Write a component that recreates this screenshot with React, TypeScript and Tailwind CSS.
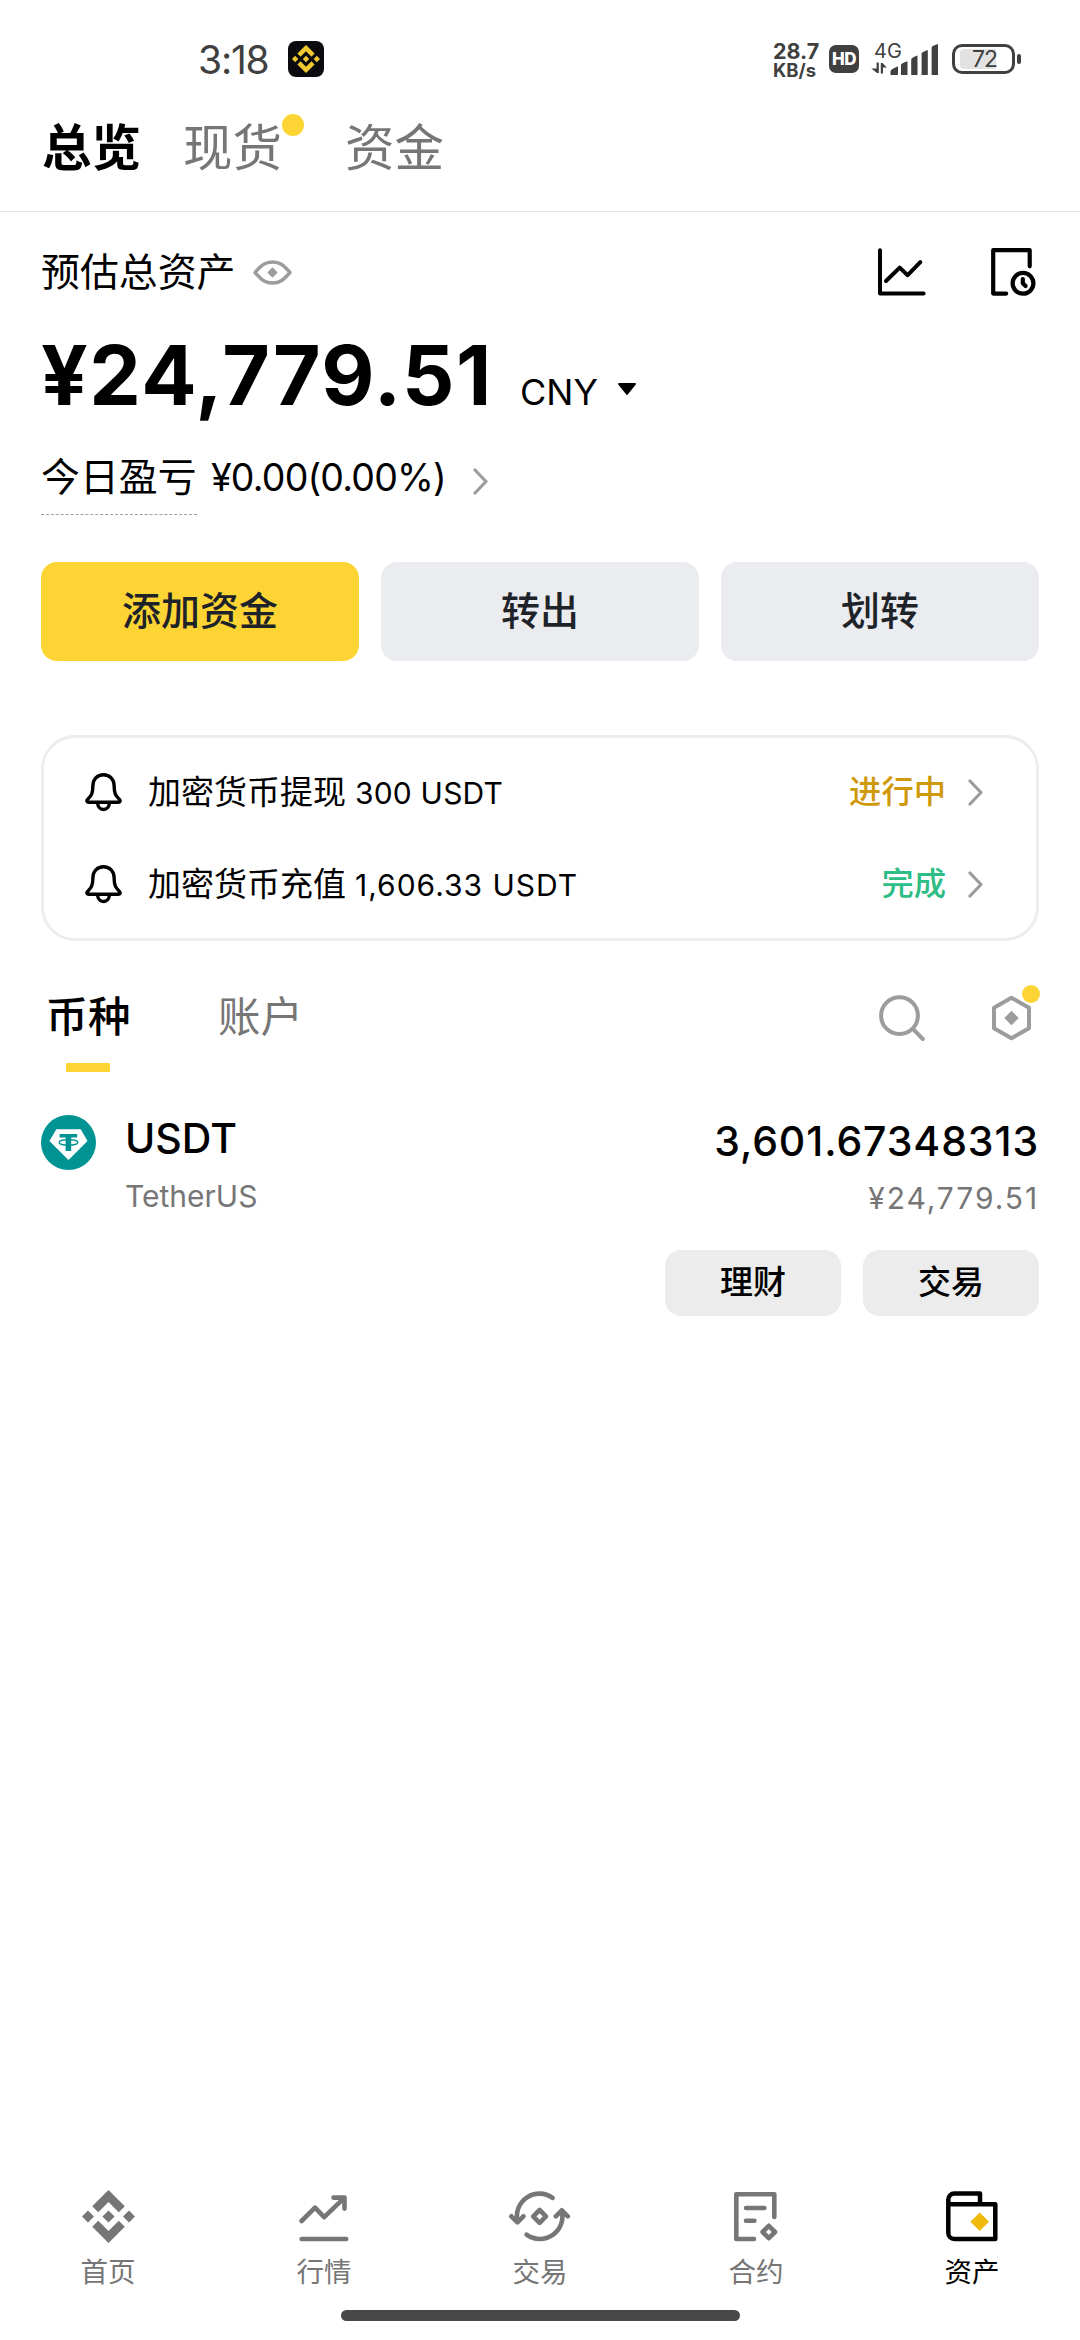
import React from 'react';

interface IconProps {
  className?: string;
}

interface Notice {
  label: string;
  amount: string;
  amountClass: string;
  status: string;
  statusClass: string;
}

interface NavItem {
  label: string;
  icon: React.ReactNode;
  active?: boolean;
}

const BinanceIcon: React.FC<IconProps> = ({ className }) => (
  <svg className={className} viewBox="0 0 126.61 126.61" fill="currentColor">
    <path d="M38.73 53.2l24.59-24.58 24.6 24.6 14.3-14.31L63.32 0 24.42 38.9z" />
    <path d="M0 63.31L14.3 49l14.31 14.31-14.31 14.3z" />
    <path d="M38.73 73.41L63.32 98l24.6-24.6 14.31 14.29-38.91 38.91-38.91-38.88z" />
    <path d="M98 63.31L112.3 49l14.31 14.3-14.31 14.32z" />
    <path d="M77.83 63.3L63.32 48.78 48.8 63.3l14.52 14.52z" />
  </svg>
);

const MarketIcon = () => (
  <svg width="50" height="53" viewBox="0 0 50 53" fill="none" stroke="currentColor" strokeWidth="4.6" strokeLinecap="round" strokeLinejoin="round">
    <path d="M2.6 31L16 17.6l9.2 9.6L45 8.2" />
    <path d="M34.5 7.6h11v11" />
    <path d="M2.6 49h44.6" />
  </svg>
);

const TradeIcon = () => (
  <svg width="61.4" height="53" viewBox="0 0 61.4 53" fill="none" stroke="currentColor" strokeWidth="4.6" strokeLinecap="round" strokeLinejoin="round">
    <path d="M43.6 7.8A22.6 22.6 0 0 0 8.4 31" />
    <path d="M2.4 26.3l6 6 6-6" />
    <path d="M17.6 44.7A22.6 22.6 0 0 0 52.8 21" />
    <path d="M46.8 26.3l6-6 6 6" />
    <path d="M30.6 20l6.4 6.4-6.4 6.4-6.4-6.4z" />
  </svg>
);

const FuturesIcon = () => (
  <svg width="44" height="53" viewBox="0 0 44 53" fill="none" stroke="currentColor" strokeWidth="4.6" strokeLinecap="round" strokeLinejoin="round">
    <path d="M40.3 27V4.3H2.3V49H20" />
    <path d="M12 18h18.4M12 30.8h8.4" />
    <path d="M34.8 35.8l6.2 6.2-6.2 6.2-6.2-6.2z" />
  </svg>
);

const WalletIcon = () => (
  <svg width="52" height="53" viewBox="0 0 52 53" fill="none" stroke="currentColor" strokeWidth="4.5" strokeLinejoin="round">
    <path d="M34 14.3V3.5H8.3a6 6 0 0 0-6 6V43a6 6 0 0 0 6 6h41V14.3H2.3" />
    <path d="M33.7 22.4l9.3 9.3-9.3 9.3-9.3-9.3z" fill="#f0b90b" stroke="none" />
  </svg>
);

const EyeIcon = () => (
  <svg width="39" height="25" viewBox="0 0 39 25" fill="none" stroke="#9c9c9c" strokeWidth="3.4" strokeLinejoin="round">
    <path d="M2 12.5C9 4.6 12.4 2 19.5 2S30 4.6 37 12.5C30 20.4 26.6 23 19.5 23S9 20.4 2 12.500z" />
    <path d="M19.5 7.3l5.2 5.2-5.2 5.2-5.2-5.200z" fill="#9c9c9c" stroke="none" />
  </svg>
);

const ChartIcon = () => (
  <svg width="48" height="48" viewBox="0 0 48 48" fill="none" stroke="currentColor" strokeWidth="4" strokeLinecap="round" strokeLinejoin="round">
    <path d="M2 2.2V45.6H45.6" />
    <path d="M8 33l13.7-13.4 8 7.6L42.3 14.2" />
  </svg>
);

const HistoryIcon = () => (
  <svg width="45" height="48" viewBox="0 0 45 48" fill="none" stroke="currentColor" strokeWidth="4.2" strokeLinecap="round" strokeLinejoin="round">
    <path d="M38.7 18.3V2.2H2.2V45.6H15.2" />
    <circle cx="32" cy="35.3" r="10.4" />
    <path d="M31.8 31v4.3l2.8 2.8" />
  </svg>
);

const BellIcon = () => (
  <svg width="37" height="39" viewBox="0 0 37 39" fill="none" stroke="currentColor" strokeWidth="3.4" strokeLinejoin="round">
    <path d="M18.5 1.7c-6.3 0-10.6 4.7-10.6 10.9 0 8.4-1.7 10-5.3 13.8-1.3 1.4-.7 2.8 1.1 2.8h29.6c1.8 0 2.4-1.4 1.1-2.8-3.6-3.8-5.3-5.4-5.3-13.8 0-6.2-4.3-10.9-10.6-10.9z" />
    <path d="M12.6 29.5c0 4 2.4 7 5.9 7s5.9-3 5.9-7" />
  </svg>
);

const ChevronIcon = () => (
  <svg width="15" height="27" viewBox="0 0 15 27" fill="none" stroke="#9c9c9c" strokeWidth="3.2" strokeLinecap="round" strokeLinejoin="round">
    <path d="M2 2l11 11.5L2 25" />
  </svg>
);

const SearchIcon = () => (
  <svg width="46" height="46" viewBox="0 0 46 46" fill="none" stroke="currentColor" strokeWidth="4" strokeLinecap="round">
    <circle cx="20.500" cy="20.7" r="18.4" />
    <path d="M34.2 34.2l9.6 9.8" />
  </svg>
);

const HexIcon = () => (
  <svg width="39" height="46" viewBox="0 0 39 46" fill="none" stroke="currentColor" strokeWidth="4" strokeLinejoin="round">
    <path d="M19.5 2.8L37 12.7V33.2L19.5 43.2 2 33.2V12.7z" />
    <path d="M19.5 15.8l7.2 7.2-7.2 7.2-7.2-7.2z" fill="currentColor" stroke="none" />
  </svg>
);

const TetherIcon = () => (
  <svg width="55" height="55" viewBox="0 0 55 55">
    <circle cx="27.5" cy="27.5" r="27.5" fill="#009393" />
    <path d="M15.8 15H39.2L45.6 26 27.5 44 9.4 26z" fill="#fff" stroke="#fff" strokeWidth="1.5" strokeLinejoin="round" />
    <path d="M18.6 19h17.6v3.6h-6V36h-5.6V22.6h-6z" fill="#009393" />
    <ellipse cx="27.5" cy="27.4" rx="9.4" ry="2.7" fill="none" stroke="#009393" strokeWidth="1.3" />
  </svg>
);

const SignalIcon = () => (
  <svg width="68" height="14" viewBox="0 0 68 14" className="overflow-visible" fill="#404040">
    <path d="M5.6 1.5h2.2V12H6L.3 7.6h5.3zM9.8 12.5V2h1.7l4.3 4.4h-3.8v6.1z" />
    <path d="M19.5 14V10.5q0-2.5 7.5-5.3V14z" />
    <path d="M30 14V3.800q0-1.300 6.500-3.500V14zM40.200 14V-1.500q0-1.600 6.300-3.900V14zM50.600 14V-7.500q0-1.600 6.200-3.600V14zM60.600 14V-13.500q0-1.700 6.400-3.600V14z" />
  </svg>
);

const StatusBar = () => (
  <div className="flex h-[118px] shrink-0 items-center pl-[198px] pr-[59px] text-[#404040]">
    <span className="w-[72px] whitespace-nowrap text-[39px] leading-none tracking-[-1.2px]">3:18</span>
    <div className="ml-[18px] flex size-9 items-center justify-center rounded-lg bg-[#0b0b0f] text-[#f0c830]">
      <BinanceIcon className="size-7" />
    </div>
    <div className="ml-auto flex items-center">
      <div className="mt-1 w-[56px] font-bold">
        <div className="text-[21.5px] leading-[19px]">28.7</div>
        <div className="text-[18.5px] leading-[19px]">KB/s</div>
      </div>
      <div className="flex h-[28px] w-[30px] items-center justify-center rounded-[7px] bg-[#404040] text-[17px] font-extrabold leading-none tracking-[-0.5px] text-white">
        HD
      </div>
      <div className="ml-3 flex h-[32px] w-[68px] flex-col justify-between">
        <span className="pl-[3px] text-[20px] leading-[16px]">4G</span>
        <SignalIcon />
      </div>
      <div className="ml-[13px] flex h-[30px] w-[63px] items-center rounded-[10px] border-[3px] border-[#404040] pl-[5px]">
        <div className="h-[20px] w-[36px] rounded-l-[4px] bg-[#e2e2e2]">
          <span className="block pl-[12px] text-[23px] leading-[20px] tracking-[-1px]">72</span>
        </div>
      </div>
      <div className="ml-0.5 h-[10px] w-[4px] rounded-[2px] bg-[#404040]" />
    </div>
  </div>
);

const Header = () => (
  <div className="flex h-[94px] shrink-0 border-b border-[#e6e6e6] pl-[42px] text-[49.5px] leading-[60px] text-[#767676]">
    <span className="w-[141px] font-bold text-black">总览</span>
    <span className="relative w-[162px]">
      现货
      <span className="absolute left-[99px] top-[-4px] size-[22px] rounded-full bg-[#fcd535]" />
    </span>
    <span>资金</span>
  </div>
);

const Balance = () => (
  <div className="px-[41px]">
    <div className="flex h-[120px] items-center">
      <span className="text-[38.9px] leading-none">预估总资产</span>
      <span className="ml-[18px]">
        <EyeIcon />
      </span>
      <div className="ml-auto flex items-center gap-[65px] pr-[3px]">
        <ChartIcon />
        <HistoryIcon />
      </div>
    </div>
    <div className="flex h-[88px] items-baseline whitespace-nowrap leading-[88px]">
      <span className="w-[479px] text-[82px] font-bold tracking-[1.5px]">¥24,779.51</span>
      <span className="w-[97px] text-[36px]">CNY</span>
      <svg className="mt-[26px] self-center" width="20" height="13" viewBox="0 0 20 13">
        <path d="M2 1h16L10 11z" stroke="#000" strokeWidth="2" strokeLinejoin="round" />
      </svg>
    </div>
    <div className="flex h-[95px] items-center whitespace-nowrap pt-[19px]">
      <span className="h-[76px] w-[156px] border-b border-dashed border-[#a0a0a0] text-[38.9px] leading-[76px]">今日盈亏</span>
      <span className="ml-[14px] w-[247px] pt-[2px] text-[37.5px] leading-none tracking-[-0.8px]">¥0.00(0.00%)</span>
      <span className="ml-[15px] pt-[9px]">
        <ChevronIcon />
      </span>
    </div>
  </div>
);

const actions = ['添加资金', '转出', '划转'];

const Actions = () => (
  <div className="mt-[47px] grid grid-cols-3 gap-[22px] px-[41px]">
    {actions.map((action, i) => (
      <button
        key={action}
        className={`h-[99px] rounded-2xl text-[39px] font-medium text-[#1e2329] ${i === 0 ? 'bg-[#fcd535]' : 'bg-[#eaecef]'}`}
      >
        {action}
      </button>
    ))}
  </div>
);

const notices: Notice[] = [
  { label: '加密货币提现', amount: '300 USDT', amountClass: 'tracking-[0.2px]', status: '进行中', statusClass: 'text-[#d0980b]' },
  { label: '加密货币充值', amount: '1,606.33 USDT', amountClass: 'tracking-[1px]', status: '完成', statusClass: 'text-[#2ebd85]' },
];

const Notices = () => (
  <div className="mx-[41px] mt-[74px] rounded-[34px] border-[3px] border-[#ededed] py-2">
    {notices.map((notice) => (
      <div key={notice.label} className="flex h-[92px] items-center pl-[41px] pr-[53px]">
        <BellIcon />
        <span className="ml-[26px] text-[33px] leading-none">{notice.label}</span>
        <span className={`ml-[9px] pt-[2px] text-[30px] leading-none ${notice.amountClass}`}>{notice.amount}</span>
        <span className={`ml-auto mr-[22px] text-[32.3px] font-medium leading-none ${notice.statusClass}`}>{notice.status}</span>
        <ChevronIcon />
      </div>
    ))}
  </div>
);

const CoinTabs = () => (
  <div className="flex items-start pl-[45px] pr-[49px] pt-[46px] text-[42.5px] leading-[60px]">
    <div className="flex w-[86px] flex-col items-center">
      <span className="font-medium">币种</span>
      <span className="mt-[16px] h-[9px] w-[44px] rounded-[1px] bg-[#fcd535]" />
    </div>
    <span className="ml-[87px] text-[#767676]">账户</span>
    <div className="ml-auto flex h-[62px] items-center gap-[67px] text-[#9c9c9c]">
      <SearchIcon />
      <span className="relative">
        <HexIcon />
        <span className="absolute left-[30px] top-[-10px] size-[18px] rounded-full bg-[#fcd535]" />
      </span>
    </div>
  </div>
);

const CoinRow = () => (
  <div className="mt-[43px] px-[41px]">
    <div className="flex items-start">
      <TetherIcon />
      <div className="ml-[29px] flex flex-col">
        <span className="text-[41px] font-medium leading-[46px]">USDT</span>
        <span className="mt-[12px] text-[30px] leading-[46px] text-[#767676]">TetherUS</span>
      </div>
      <div className="ml-auto flex flex-col pt-[3px] text-right">
        <span className="text-[41px] font-medium leading-[46px] tracking-[0.9px]">3,601.67348313</span>
        <span className="mt-[11px] text-[30px] leading-[46px] tracking-[1.9px] text-[#767676]">¥24,779.51</span>
      </div>
    </div>
    <div className="mt-[29px] flex justify-end gap-[22px] text-[33px] font-medium">
      <button className="h-[66px] w-[176px] rounded-2xl bg-[#ececec]">理财</button>
      <button className="h-[66px] w-[176px] rounded-2xl bg-[#ececec]">交易</button>
    </div>
  </div>
);

const navItems: NavItem[] = [
  { label: '首页', icon: <BinanceIcon className="size-[53px]" /> },
  { label: '行情', icon: <MarketIcon /> },
  { label: '交易', icon: <TradeIcon /> },
  { label: '合约', icon: <FuturesIcon /> },
  { label: '资产', icon: <WalletIcon />, active: true },
];

const BottomNav = () => (
  <div className="mt-auto">
    <div className="grid grid-cols-5">
      {navItems.map((item) => (
        <div key={item.label} className={`flex flex-col items-center ${item.active ? 'text-black' : 'text-[#767676]'}`}>
          {item.icon}
          <span className="mt-[9px] text-[27.5px] leading-[40px]">{item.label}</span>
        </div>
      ))}
    </div>
    <div className="mx-auto mb-[19px] mt-[18px] h-[11px] w-[399px] rounded-full bg-[#484848]" />
  </div>
);

export default function App() {
  return (
    <div lang="zh-CN" className="flex h-[2340px] w-[1080px] flex-col overflow-hidden bg-white font-[Inter,'Noto_Sans_CJK_SC',sans-serif] text-black">
      <StatusBar />
      <Header />
      <Balance />
      <Actions />
      <Notices />
      <CoinTabs />
      <CoinRow />
      <BottomNav />
    </div>
  );
}
